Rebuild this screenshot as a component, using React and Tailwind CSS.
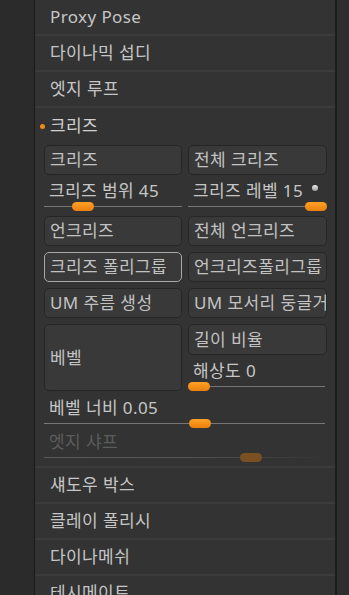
import React from "react";

const FONT = { fontFamily: '"Noto Sans", "Noto Sans CJK KR", sans-serif' };
const TXT = "text-[17px] tracking-[0.4px]";

function Row({ children }) {
  return (
    <div className={"flex h-[36px] shrink-0 items-center border-b-2 border-[#3b3b3b] pl-[15px] text-[#c6c6c6] " + TXT}>
      {children}
    </div>
  );
}

function Btn({ children, className = "", active = false }) {
  return (
    <div
      className={
        "flex items-center rounded-[5px] border bg-[#393939] pl-[5px] text-[#c2c2c2] whitespace-nowrap overflow-hidden " +
        TXT +
        " " +
        (active ? "border-[#a8a8a8] " : "border-[#262626] ") +
        className
      }
    >
      {children}
    </div>
  );
}

function Knob({ left, dim = false }) {
  return (
    <div
      className={
        "absolute top-0 h-[9px] w-[22px] rounded-full " +
        (dim ? "bg-[#7a4f22]" : "bg-gradient-to-b from-[#ffa126] to-[#ea7f0c]")
      }
      style={{ left }}
    />
  );
}

function Slider({ label, knob, trackRight = 0, dim = false, extra = null }) {
  return (
    <div className="flex flex-col">
      <div className={"flex h-[20px] items-center pl-[5px] " + TXT + (dim ? " text-[#5c5c5c]" : " text-[#c6c6c6]")}>
        <span className="whitespace-nowrap">{label}</span>
        {extra}
      </div>
      <div className="relative mt-[1px] h-[9px]">
        <div
          className={
            "absolute left-0 top-[4px] h-[1px] " +
            (dim ? "bg-gradient-to-r from-[#5a5a5a] via-[#555555] to-transparent" : "bg-[#767676]")
          }
          style={{ right: trackRight }}
        />
        <Knob left={knob} dim={dim} />
      </div>
    </div>
  );
}

export default function App() {
  return (
    <div className="flex h-[595px] w-[349px] overflow-hidden bg-[#2b2b2b]" style={FONT}>
      <div className="w-[34px] shrink-0 bg-[#2b2b2b]" />
      <div className="w-[1px] shrink-0 bg-[#1a1a1a]" />
      <div className="flex w-[300px] shrink-0 flex-col bg-[#333333]">
        <Row>Proxy Pose</Row>
        <Row>다이나믹 섭디</Row>
        <Row>엣지 루프</Row>
        <div className={"relative flex h-[36px] shrink-0 items-center pl-[15px] text-[#d0d0d0] " + TXT}>
          <div className="absolute left-[5px] top-[16px] h-[5px] w-[5px] rounded-full bg-[#f08a1a]" />
          크리즈
        </div>
        <div className="flex shrink-0 flex-col border-b-2 border-[#3b3b3b] pl-[9px] pr-[8px]">
          <div className="mt-[1px] grid grid-cols-[138px_139px] gap-x-[6px]">
            <Btn className="h-[30px]">크리즈</Btn>
            <Btn className="h-[30px]">전체 크리즈</Btn>
          </div>
          <div className="grid h-[41px] grid-cols-[138px_139px] gap-x-[6px] pt-[6px]">
            <Slider label="크리즈 범위 45" knob={28} />
            <Slider
              label="크리즈 레벨 15"
              knob={117}
              extra={
                <div className="ml-[9px] mt-[-6px] h-[6px] w-[6px] shrink-0 rounded-full bg-gradient-to-b from-[#f0f0f0] to-[#9a9a9a]" />
              }
            />
          </div>
          <div className="flex flex-col gap-y-[6px]">
            <div className="grid grid-cols-[138px_139px] gap-x-[6px]">
              <Btn className="h-[30px]">언크리즈</Btn>
              <Btn className="h-[30px]">전체 언크리즈</Btn>
            </div>
            <div className="grid grid-cols-[138px_139px] gap-x-[6px]">
              <Btn className="h-[30px]" active>크리즈 폴리그룹</Btn>
              <Btn className="h-[30px]">언크리즈폴리그룹</Btn>
            </div>
            <div className="grid grid-cols-[138px_139px] gap-x-[6px]">
              <Btn className="h-[30px]">UM 주름 생성</Btn>
              <Btn className="h-[30px]">UM 모서리 둥글거</Btn>
            </div>
            <div className="grid grid-cols-[138px_139px] gap-x-[6px]">
              <Btn className="h-[67px]">베벨</Btn>
              <div className="flex flex-col">
                <Btn className="h-[31px]">길이 비율</Btn>
                <div className="pt-[6px]">
                  <Slider label="해상도 0" knob={0} trackRight={2} />
                </div>
              </div>
            </div>
          </div>
          <div className="pt-[7px]">
            <Slider label="베벨 너비 0.05" knob={145} trackRight={2} />
          </div>
          <div className="pt-[4px] pb-[4px]">
            <Slider label="엣지 샤프" knob={196} dim trackRight={2} />
          </div>
        </div>
        <Row>섀도우 박스</Row>
        <Row>클레이 폴리시</Row>
        <Row>다이나메쉬</Row>
        <Row>테시메이트</Row>
      </div>
      <div className="w-[2px] shrink-0 bg-[#1c1c1c]" />
      <div className="flex-1 bg-[#2e2e2e]" />
    </div>
  );
}
